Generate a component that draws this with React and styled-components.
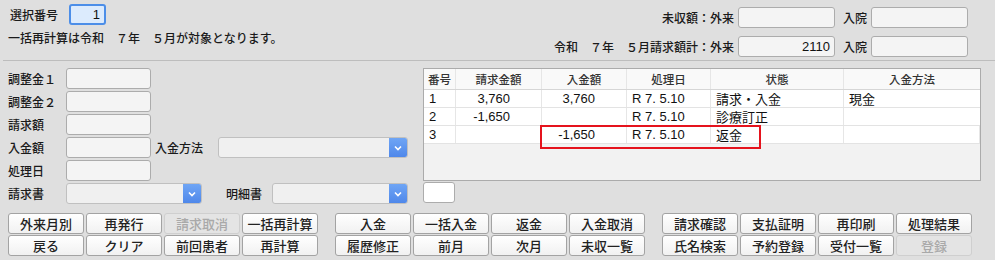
import React from "react";
import styled, { createGlobalStyle } from "styled-components";

const GlobalStyle = createGlobalStyle`
  body {
    margin: 0;
    background: #dfdfdf;
    font-family: "Liberation Sans", "Noto Sans CJK JP", sans-serif;
    font-size: 12px;
    font-weight: 500;
    color: #1a1a1a;
  }
`;

//=== 画面全体 ===//
const Page = styled.div`
  width: 995px;
  height: 260px;
  overflow: hidden;
`;

const TopArea = styled.div`
  display: flex;
  justify-content: space-between;
  height: 56px;
  margin-left: 3px;
  padding: 4px 27px 0 5px;
  border-bottom: 1px solid #bdbdbd;
`;

const TopLeft = styled.div`
  display: flex;
  flex-direction: column;
  gap: 2px;
`;

const Line = styled.div`
  display: flex;
  align-items: center;
  height: 21px;
`;

const Label = styled.span`
  width: ${props => props.w || "auto"};
  padding-left: ${props => props.pl || "0"};
  text-align: ${props => props.align || "left"};
  white-space: nowrap;
  box-sizing: border-box;
`;

const TextBox = styled.div`
  width: ${props => props.w};
  height: 21px;
  box-sizing: border-box;
  border: ${props => (props.focus ? "2px solid #4c8ee8" : "1px solid #acacac")};
  border-radius: 3px;
  background: ${props => (props.focus ? "#dcebfd" : props.white ? "#fff" : "#f4f4f4")};
  padding: 0 4px;
  display: flex;
  align-items: center;
  justify-content: flex-end;
  font-size: 13px;
  font-weight: normal;
  color: #111;
`;

const TopRight = styled.div`
  display: grid;
  grid-template-columns: auto 97px 28px 97px;
  column-gap: 4px;
  row-gap: 2px;
  align-items: center;
  & > span:nth-of-type(2n) {
    padding-left: 4px;
  }
`;

//=== 中段 ===//
const Middle = styled.div`
  display: flex;
  gap: 15px;
  padding: 7px 0 0 8px;
  height: 137px;
`;

const Form = styled.div`
  width: 400px;
  display: flex;
  flex-direction: column;
  gap: 2px;
`;

const FormRow = styled.div`
  display: flex;
  align-items: center;
  height: 21px;
`;

const SelectBox = styled.div`
  width: ${props => props.w};
  margin-left: ${props => props.ml || "0"};
  height: 21px;
  box-sizing: border-box;
  border: 1px solid #c0c0c0;
  border-radius: 3px;
  background: #f0f0f0;
  display: flex;
  justify-content: flex-end;
  overflow: hidden;
`;

const SelectArrow = styled.div`
  width: 18px;
  background: linear-gradient(#6fa5f5, #4f88ea);
  display: flex;
  align-items: center;
  justify-content: center;
`;

const TableSide = styled.div`
  display: flex;
  flex-direction: column;
  gap: 1px;
`;

const Table = styled.div`
  width: 558px;
  height: 113px;
  box-sizing: border-box;
  border: 1px solid #ababab;
  background: #f2f2f2;
`;

const Row = styled.div`
  position: relative;
  display: grid;
  grid-template-columns: 32px 86px 85px 84px 133px 136px;
  height: ${props => (props.head ? "21px" : "18px")};
  box-sizing: border-box;
  border-bottom: 1px solid ${props => (props.head ? "#d6d6d6" : "#e3e3e3")};
  background: ${props => (props.head ? "#f9f9f9" : "#fff")};
`;

const Cell = styled.div`
  display: flex;
  align-items: center;
  justify-content: ${props => (props.right ? "flex-end" : props.center ? "center" : "flex-start")};
  padding: ${props => (props.right ? "0 31px 0 0" : "0 5px")};
  border-right: 1px solid #e6e6e6;
  font-size: ${props => (props.head ? "11.5px" : "13px")};
  font-weight: ${props => (props.head ? 500 : "normal")};
  color: ${props => (props.head ? "#333" : "#111")};
  white-space: nowrap;
  overflow: hidden;
  &:last-child {
    border-right: none;
  }
`;

const Mark = styled.div`
  position: absolute;
  left: 116px;
  top: -1px;
  width: 221px;
  height: 24px;
  box-sizing: border-box;
  border: 2px solid #e5131d;
  pointer-events: none;
`;

//=== ボタン ===//
const ButtonBar = styled.div`
  display: flex;
  gap: 17px;
  padding: 8px 0 0 8px;
`;

const ButtonGroup = styled.div`
  display: grid;
  grid-template-columns: repeat(4, 76px);
  column-gap: 2px;
  row-gap: 1px;
`;

const Btn = styled.button`
  height: 21px;
  padding: 0;
  border: 1px solid ${props => (props.disabled ? "#cfcfcf" : "#a3a3a3")};
  border-radius: 3px;
  background: ${props => (props.disabled ? "#e4e4e4" : "linear-gradient(#ffffff, #f1f1f1)")};
  color: ${props => (props.disabled ? "#a9a9a9" : "#222")};
  font-family: "Noto Sans CJK JP", sans-serif;
  font-size: 13px;
  font-weight: 500;
  line-height: 19px;
`;

const Chevron = () => (
  <svg width="8" height="6" viewBox="0 0 8 6">
    <path d="M1 1.5 L4 4.5 L7 1.5" fill="none" stroke="#fff" strokeWidth="1.6" />
  </svg>
);

const Select = ({ w, ml }) => (
  <SelectBox w={w} ml={ml}>
    <SelectArrow><Chevron /></SelectArrow>
  </SelectBox>
);

const rows = [
  { no: "1", seikyu: "3,760", nyukin: "3,760", date: "R 7. 5.10", state: "請求・入金", method: "現金" },
  { no: "2", seikyu: "-1,650", nyukin: "", date: "R 7. 5.10", state: "診療訂正", method: "" },
  { no: "3", seikyu: "", nyukin: "-1,650", date: "R 7. 5.10", state: "返金", method: "", mark: true },
];

const groups = [
  [["外来月別"], ["再発行"], ["請求取消", true], ["一括再計算"], ["戻る"], ["クリア"], ["前回患者"], ["再計算"]],
  [["入金"], ["一括入金"], ["返金"], ["入金取消"], ["履歴修正"], ["前月"], ["次月"], ["未収一覧"]],
  [["請求確認"], ["支払証明"], ["再印刷"], ["処理結果"], ["氏名検索"], ["予約登録"], ["受付一覧"], ["登録", true]],
];

const App = () => {
  return (
    <Page>
      <GlobalStyle />
      <TopArea>
        <TopLeft>
          <Line>
            <Label w="61px" pl="2px">選択番号</Label>
            <TextBox w="37px" focus>1</TextBox>
          </Line>
          <Line>一括再計算は令和　７年　５月が対象となります。</Line>
        </TopLeft>
        <TopRight>
          <Label align="right">未収額：外来</Label>
          <TextBox w="97px" />
          <Label>入院</Label>
          <TextBox w="97px" />
          <Label align="right">令和　７年　５月請求額計：外来</Label>
          <TextBox w="97px">2110</TextBox>
          <Label>入院</Label>
          <TextBox w="97px" />
        </TopRight>
      </TopArea>

      <Middle>
        <Form>
          <FormRow><Label w="58px">調整金１</Label><TextBox w="85px" /></FormRow>
          <FormRow><Label w="58px">調整金２</Label><TextBox w="85px" /></FormRow>
          <FormRow><Label w="58px">請求額</Label><TextBox w="85px" /></FormRow>
          <FormRow>
            <Label w="58px">入金額</Label><TextBox w="85px" />
            <Label w="67px" pl="4px">入金方法</Label><Select w="190px" />
          </FormRow>
          <FormRow><Label w="58px">処理日</Label><TextBox w="85px" /></FormRow>
          <FormRow>
            <Label w="58px">請求書</Label><Select w="136px" />
            <Label w="70px" pl="24px">明細書</Label><Select w="136px" />
          </FormRow>
        </Form>
        <TableSide>
          <Table>
            <Row head>
              <Cell head center>番号</Cell>
              <Cell head center>請求金額</Cell>
              <Cell head center>入金額</Cell>
              <Cell head center>処理日</Cell>
              <Cell head center>状態</Cell>
              <Cell head center>入金方法</Cell>
            </Row>
            {rows.map((item, index) => (
              <Row key={index}>
                <Cell>{item.no}</Cell>
                <Cell right>{item.seikyu}</Cell>
                <Cell right>{item.nyukin}</Cell>
                <Cell>{item.date}</Cell>
                <Cell>{item.state}</Cell>
                <Cell>{item.method}</Cell>
                {item.mark && <Mark />}
              </Row>
            ))}
          </Table>
          <TextBox w="32px" white />
        </TableSide>
      </Middle>

      <ButtonBar>
        {groups.map((group, gi) => (
          <ButtonGroup key={gi}>
            {group.map(([text, disabled], bi) => (
              <Btn key={bi} disabled={disabled}>{text}</Btn>
            ))}
          </ButtonGroup>
        ))}
      </ButtonBar>
    </Page>
  );
};

export default App;
